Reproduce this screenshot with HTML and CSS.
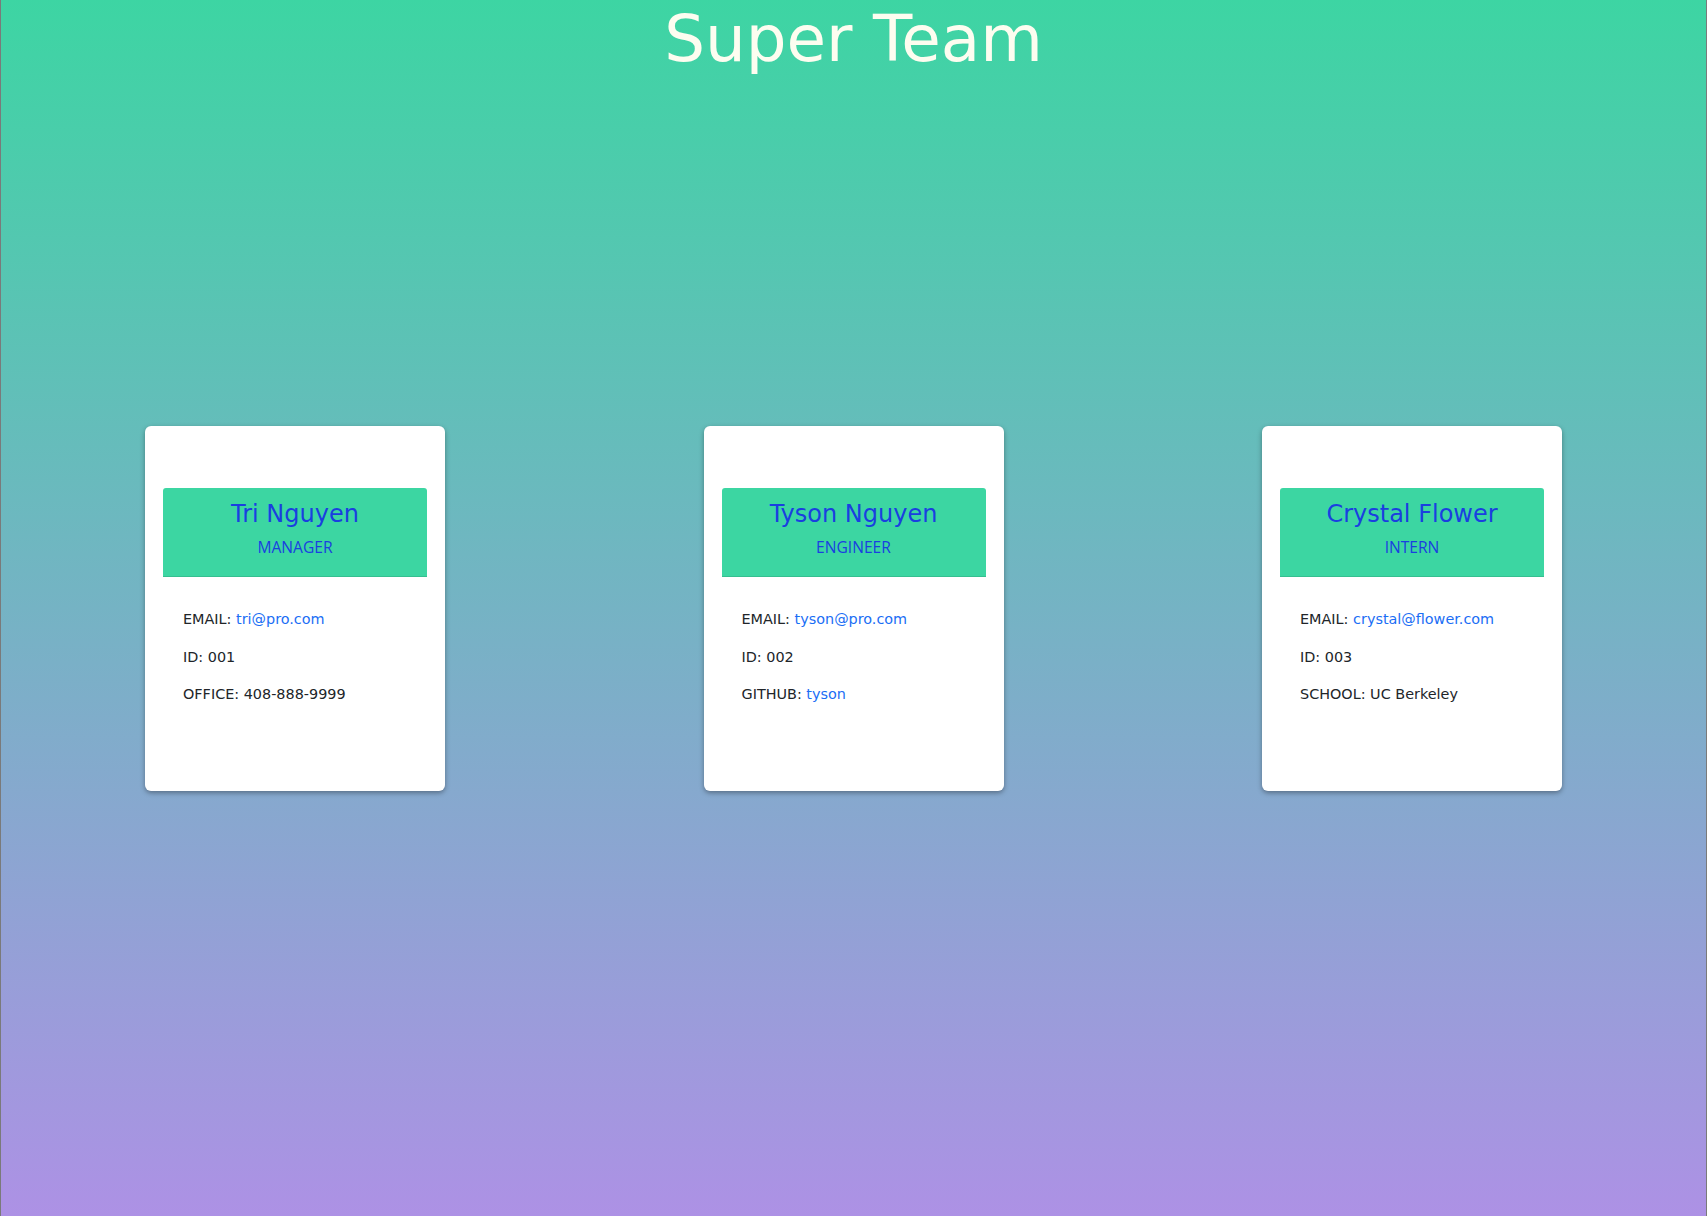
FILE: index.html
```html
<!DOCTYPE html>
<html lang="en">
<head>
<meta charset="utf-8">
<title>Super Team</title>
<link rel="stylesheet" href="styles.css">
</head>
<body>
<div class="page">
  <header class="top">
    <h1 class="title">Super Team</h1>
  </header>
  <main class="team">
    <div class="card">
      <div class="card-head">
        <h2 class="name">Tri Nguyen</h2>
        <p class="role">MANAGER</p>
      </div>
      <ul class="info">
        <li>EMAIL: <a href="#">tri@pro.com</a></li>
        <li>ID: 001</li>
        <li>OFFICE: 408-888-9999</li>
      </ul>
    </div>
    <div class="card">
      <div class="card-head">
        <h2 class="name">Tyson Nguyen</h2>
        <p class="role">ENGINEER</p>
      </div>
      <ul class="info">
        <li>EMAIL: <a href="#">tyson@pro.com</a></li>
        <li>ID: 002</li>
        <li>GITHUB: <a href="#">tyson</a></li>
      </ul>
    </div>
    <div class="card">
      <div class="card-head">
        <h2 class="name">Crystal Flower</h2>
        <p class="role">INTERN</p>
      </div>
      <ul class="info">
        <li>EMAIL: <a href="#">crystal@flower.com</a></li>
        <li>ID: 003</li>
        <li>SCHOOL: UC Berkeley</li>
      </ul>
    </div>
  </main>
</div>
</body>
</html>
```
FILE: styles.css
```css
html, body {
  margin: 0;
  padding: 0;
}
body {
  font-family: "DejaVu Sans", "Liberation Sans", sans-serif;
  color: #212529;
}
.page {
  box-sizing: border-box;
  min-height: 1216px;
  border-left: 1px solid #7a7a7a;
  border-right: 1px solid #7a7a7a;
  background: linear-gradient(to bottom, #3dd5a3 0%, #ad91e5 100%);
}
.top {
  padding-top: 0;
  height: 80px;
  box-sizing: border-box;
}
.title {
  margin: 0;
  text-align: center;
  font-size: 64.3px;
  line-height: 77px;
  font-weight: 400;
  color: #fdfdf0;
}
.team {
  display: flex;
  justify-content: space-between;
  align-items: flex-start;
  padding: 346px 144px 0;
}
.card {
  box-sizing: border-box;
  width: 300px;
  height: 365px;
  padding: 62px 18px 0;
  background: #fff;
  border-radius: 6px;
  box-shadow: 0 2px 5px rgba(0, 0, 0, 0.35);
}
.card-head {
  box-sizing: border-box;
  height: 89px;
  padding-top: 12px;
  background: #3cd6a2;
  border-bottom: 1px solid #35bf90;
  border-radius: 3px 3px 0 0;
  text-align: center;
  color: #1a3fe0;
}
.name {
  margin: 0;
  font-size: 24px;
  line-height: 29px;
  font-weight: 400;
}
.role {
  margin: 7px 0 0;
  font-family: "Open Sans", "Noto Sans", sans-serif;
  font-size: 15.6px;
  line-height: 23.7px;
}
.info {
  list-style: none;
  margin: 0;
  padding: 24px 0 0 20px;
  font-size: 14.4px;
  line-height: 37.5px;
}
.info a {
  color: #1a6ef5;
  text-decoration: none;
}
```
